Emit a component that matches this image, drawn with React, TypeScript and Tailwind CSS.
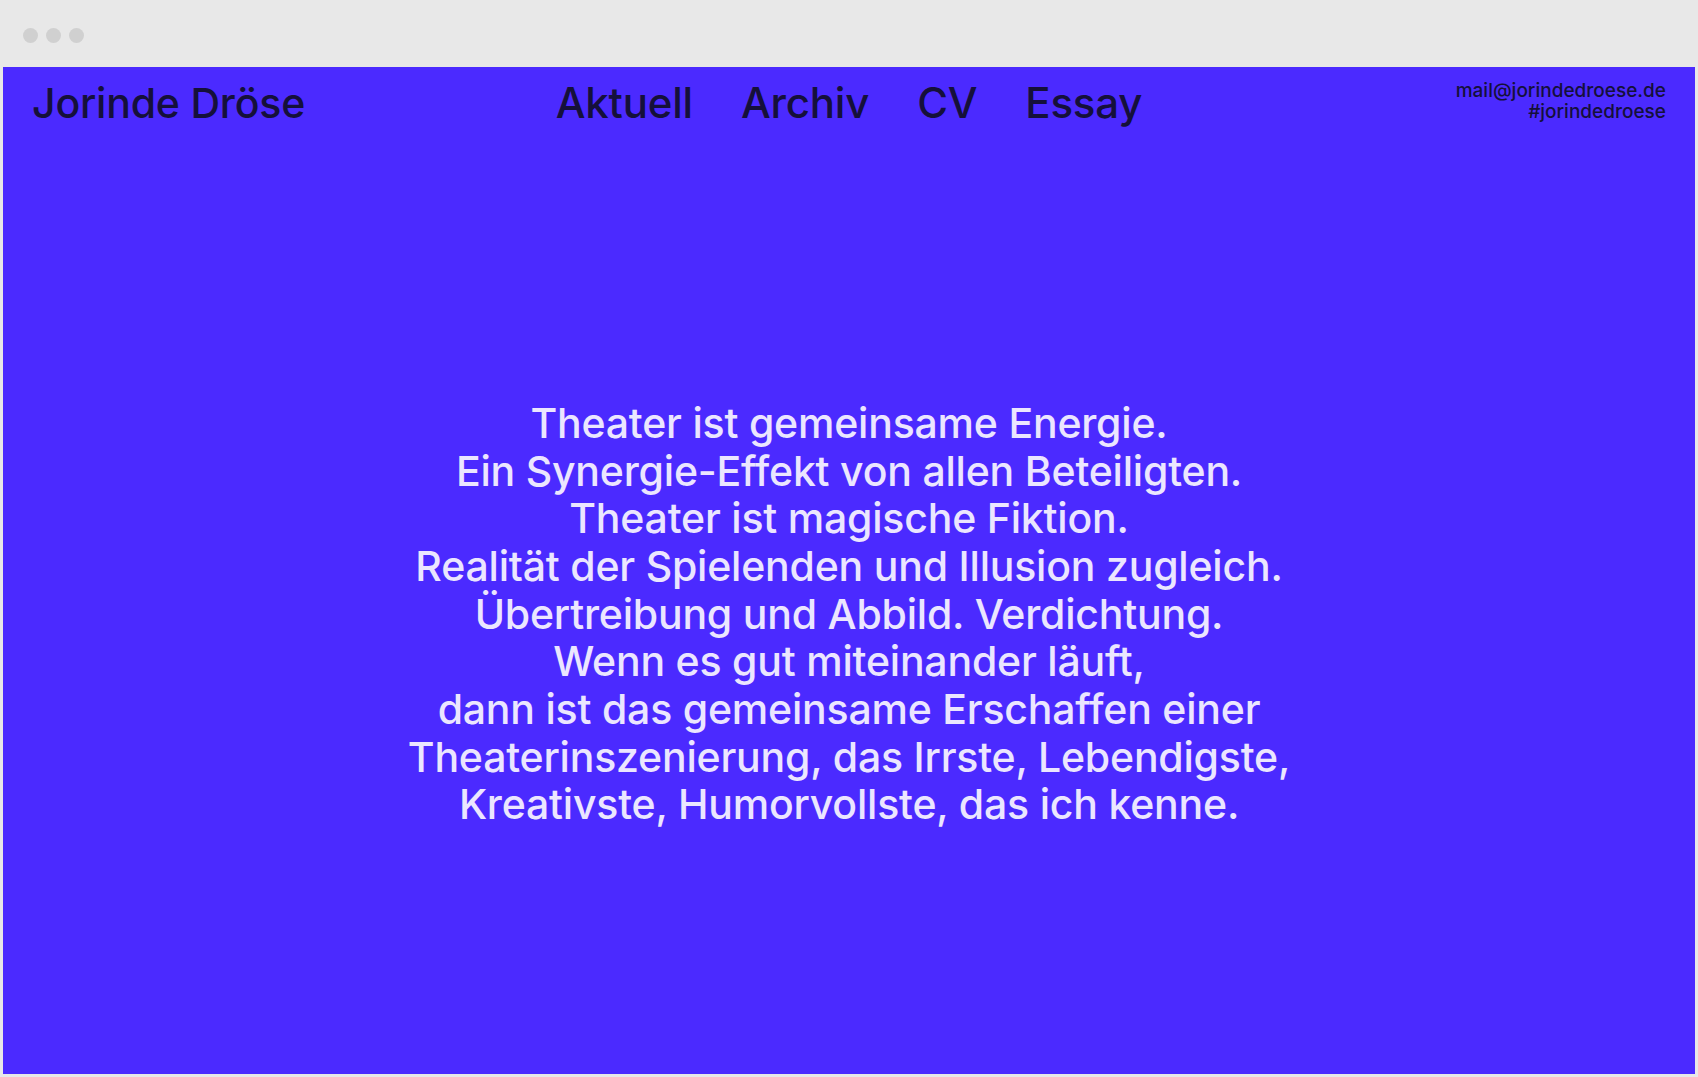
import React from "react";

const lines = [
  "Theater ist gemeinsame Energie.",
  "Ein Synergie-Effekt von allen Beteiligten.",
  "Theater ist magische Fiktion.",
  "Realität der Spielenden und Illusion zugleich.",
  "Übertreibung und Abbild. Verdichtung.",
  "Wenn es gut miteinander läuft,",
  "dann ist das gemeinsame Erschaffen einer",
  "Theaterinszenierung, das Irrste, Lebendigste,",
  "Kreativste, Humorvollste, das ich kenne.",
];

export default function App() {
  return (
    <div
      className="w-[1698px] h-[1077px] bg-[#e8e8e8] flex flex-col overflow-hidden"
      style={{ fontFamily: "Inter, 'Noto Sans', sans-serif" }}
    >
      <div className="h-[67px] flex items-center gap-[8px] pl-[23px] pt-[4px] shrink-0">
        <span className="w-[15px] h-[15px] rounded-full bg-[#d0d0d0]" />
        <span className="w-[15px] h-[15px] rounded-full bg-[#d0d0d0]" />
        <span className="w-[15px] h-[15px] rounded-full bg-[#d0d0d0]" />
      </div>
      <div className="flex-1 mx-[3px] mb-[3px] bg-[#4b2aff] flex flex-col">
        <header className="relative flex items-start justify-between px-[29px] pt-[6px] text-[#15103a]">
          <div className="text-[41px] leading-[60px] font-medium tracking-[-0.005em]">Jorinde Dröse</div>
          <nav className="absolute left-0 right-0 top-[6px] flex justify-center gap-[48px] text-[42px] leading-[60px] font-medium tracking-[-0.005em]">
            <span>Aktuell</span>
            <span>Archiv</span>
            <span>CV</span>
            <span>Essay</span>
          </nav>
          <div className="text-right text-[19px] leading-[21px] font-medium pt-[7px]">
            <div>mail@jorindedroese.de</div>
            <div>#jorindedroese</div>
          </div>
        </header>
        <main className="flex-1 flex items-center justify-center">
          <div className="mt-[22px] text-center text-[#ebe6ff] text-[41px] leading-[47.7px] font-medium tracking-[-0.005em]">
            {lines.map((l) => (
              <div key={l}>{l}</div>
            ))}
          </div>
        </main>
      </div>
    </div>
  );
}
